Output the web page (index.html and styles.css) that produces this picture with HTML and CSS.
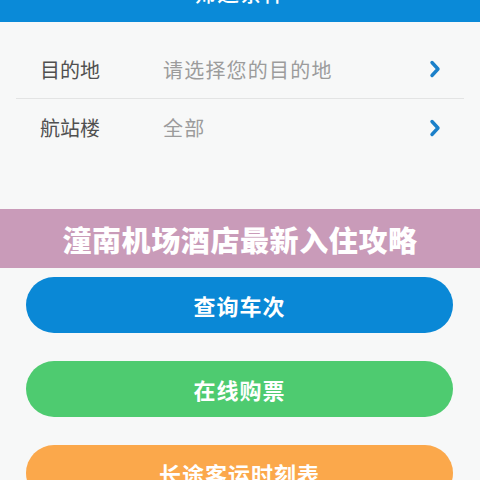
FILE: index.html
```html
<!DOCTYPE html>
<html lang="zh-CN">
<head>
    <meta charset="UTF-8">
    <meta name="viewport" content="width=device-width, initial-scale=1.0">
    <title>汽车票查询</title>
    <link rel="stylesheet" href="styles.css">
</head>
<body>

    <!-- Top bar -->
    <header class="topbar">
        <h1>筛选条件</h1>
    </header>

    <!-- Filter list -->
    <div class="filter-list">
        <div class="filter-row">
            <span class="filter-label">目的地</span>
            <span class="filter-value">请选择您的目的地</span>
            <svg class="chevron" width="12" height="18" viewBox="0 0 12 18">
                <path d="M3 2.5L9 9L3 15.5" fill="none" stroke="currentColor" stroke-width="3.4" stroke-linecap="round" stroke-linejoin="round"/>
            </svg>
        </div>
        <div class="filter-row">
            <span class="filter-label">航站楼</span>
            <span class="filter-value">全部</span>
            <svg class="chevron" width="12" height="18" viewBox="0 0 12 18">
                <path d="M3 2.5L9 9L3 15.5" fill="none" stroke="currentColor" stroke-width="3.4" stroke-linecap="round" stroke-linejoin="round"/>
            </svg>
        </div>
    </div>

    <!-- Article title -->
    <div class="banner">潼南机场酒店最新入住攻略</div>

    <!-- Actions -->
    <div class="actions">
        <button class="action-btn btn-blue">查询车次</button>
        <button class="action-btn btn-green">在线购票</button>
        <button class="action-btn btn-orange">长途客运时刻表</button>
    </div>

</body>
</html>
```

FILE: styles.css
```css
* {
    margin: 0;
    padding: 0;
    box-sizing: border-box;
}

body {
    font-family: "Noto Sans CJK SC", "Noto Sans", sans-serif;
    background-color: #f7f8f8;
    width: 480px;
    height: 480px;
    overflow: hidden;
}

.topbar {
    height: 22px;
    background-color: #0a8ad8;
    overflow: hidden;
    display: flex;
    justify-content: center;
    align-items: flex-end;
}

.topbar h1 {
    color: #fff;
    font-size: 22px;
    font-weight: 500;
    line-height: 22px;
    margin-bottom: 20px;
    letter-spacing: 1px;
}

.filter-list {
    margin: 18px 16px 0;
}

.filter-row {
    height: 58px;
    display: flex;
    align-items: center;
    padding: 0 23px 0 24px;
}

.filter-row + .filter-row {
    border-top: 1px solid #e3e4e4;
}

.filter-label {
    width: 123px;
    font-size: 20px;
    font-weight: 400;
    color: #505050;
}

.filter-value {
    flex: 1;
    font-size: 20px;
    color: #9c9c9c;
    letter-spacing: 1.2px;
}

.chevron {
    color: #1b80c9;
}

.banner {
    margin-top: 53px;
    height: 59px;
    background-color: #c99bb9;
    color: #fff;
    font-size: 29px;
    font-weight: 900;
    letter-spacing: 0.6px;
    display: flex;
    justify-content: center;
    align-items: center;
}

.actions {
    display: flex;
    flex-direction: column;
    gap: 28px;
    padding: 9px 27px 0 26px;
}

.action-btn {
    height: 56px;
    border: none;
    border-radius: 28px;
    color: #fff;
    font-family: inherit;
    font-size: 22px;
    font-weight: 700;
    letter-spacing: 1px;
}

.btn-blue {
    background-color: #0a88d6;
}

.btn-green {
    background-color: #4ecb70;
}

.btn-orange {
    background-color: #fba84b;
}
```
